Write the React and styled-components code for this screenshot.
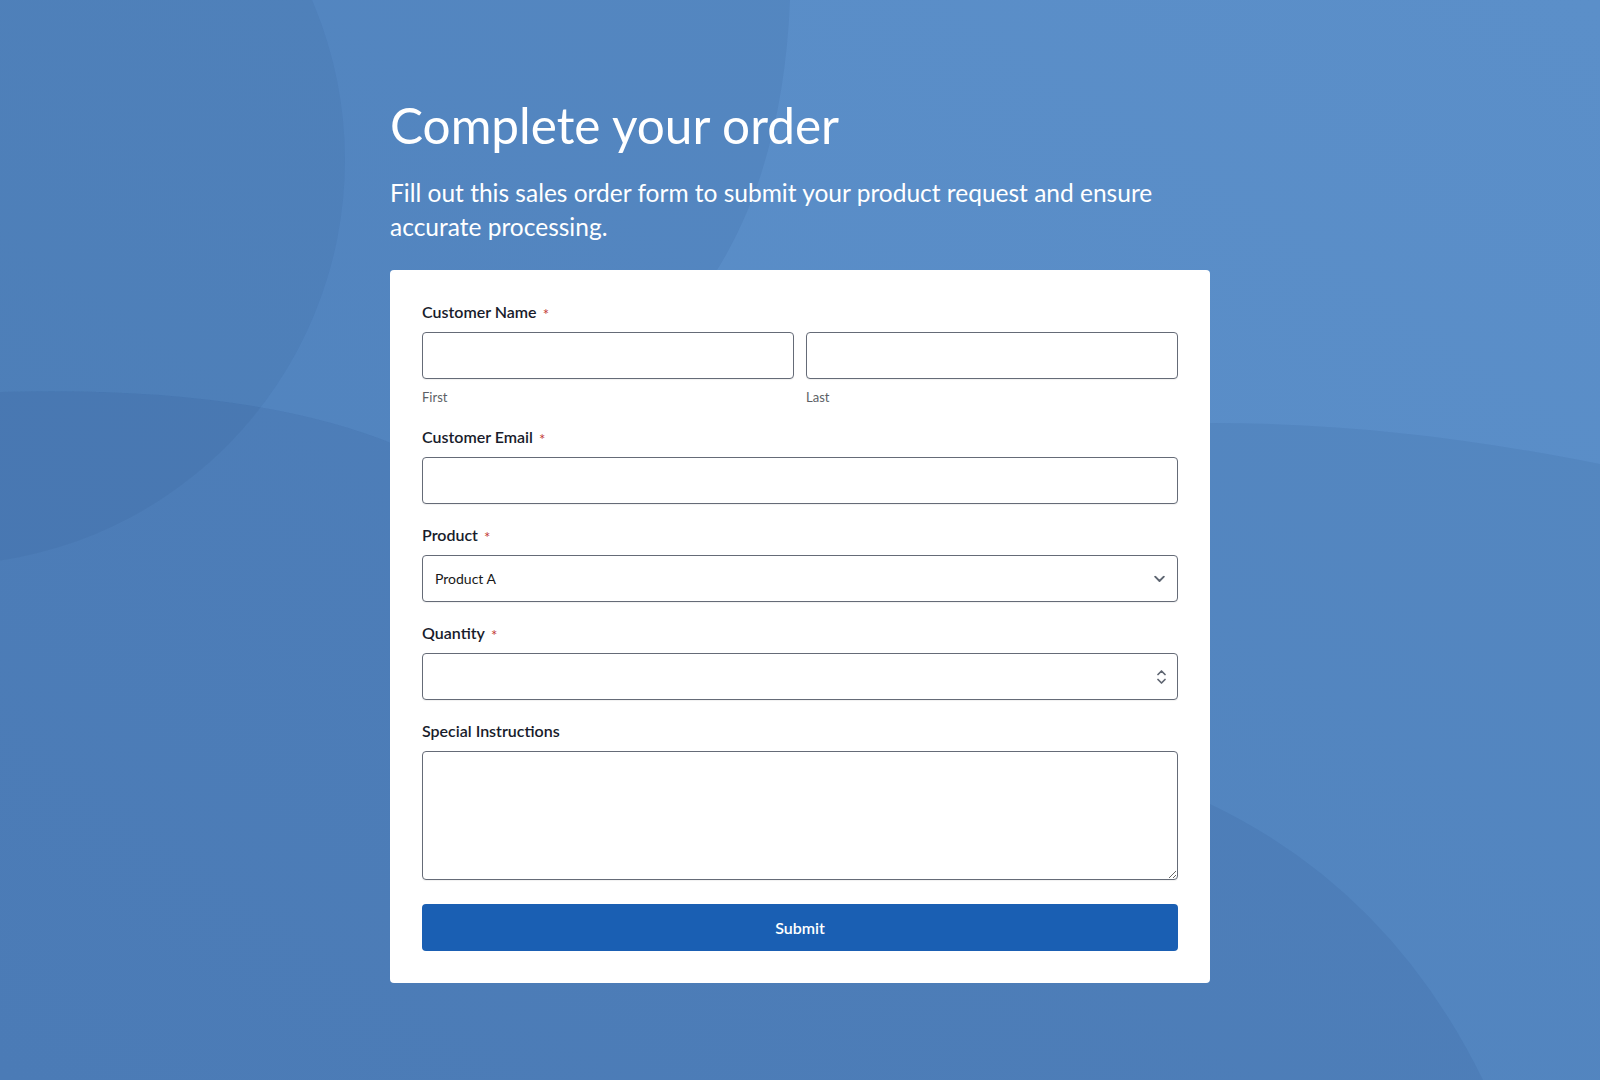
import React from 'react';
import styled, { createGlobalStyle } from 'styled-components';

// soft blue backdrop with the large faded shapes behind the form
const backdrop = `<svg xmlns='http://www.w3.org/2000/svg' viewBox='0 0 1600 1080' preserveAspectRatio='none'>
<defs><linearGradient id='g' x1='1' y1='0' x2='0' y2='1'><stop offset='0' stop-color='#5b8fc9'/><stop offset='1' stop-color='#5689c4'/></linearGradient></defs>
<rect width='1600' height='1080' fill='url(#g)'/>
<g fill='#142d64'>
<path fill-opacity='0.07' d='M0 0H790C786 105 762 200 714 275L396 445Q250 385 0 392Z'/>
<circle fill-opacity='0.06' cx='-60' cy='160' r='405'/>
<path fill-opacity='0.07' d='M0 392Q250 385 396 445L1210 423C1350 423 1480 440 1600 464V1080H0Z'/>
<path fill-opacity='0.07' d='M0 392Q250 385 396 445L1000 700L1210 804Q1390 890 1483 1080H0Z'/>
</g></svg>`;

const GlobalStyle = createGlobalStyle`
  html, body {
    margin: 0;
    padding: 0;
  }
  body {
    font-family: Lato, 'Noto Sans', sans-serif;
  }
`;

const Page = styled.div`
  min-height: 100vh;
  box-sizing: border-box;
  padding: 97px 0 80px;
  display: flex;
  justify-content: center;
  background: #5588c3 url("data:image/svg+xml,${encodeURIComponent(backdrop)}") center / 100% 100% no-repeat;
`;

const Column = styled.div`
  width: 820px;
`;

const Title = styled.h1`
  margin: 0;
  color: #fff;
  font-size: 49.5px;
  font-weight: 400;
  line-height: 57.6px;
`;

const Intro = styled.p`
  margin: 21px 0 25px;
  color: #fff;
  font-size: 24.5px;
  line-height: 34.7px;
`;

const Card = styled.form`
  display: flex;
  flex-direction: column;
  gap: 21px;
  padding: 32px;
  background: #fff;
  border-radius: 4px;
`;

const Field = styled.div`
  display: flex;
  flex-direction: column;
`;

const Label = styled.label`
  margin-bottom: 10px;
  color: #181c2b;
  font-size: 16px;
  font-weight: 600;
  line-height: 20px;
`;

const Required = styled.span`
  margin-left: 6px;
  color: #c23934;
  font-size: 15px;
  font-weight: 400;
  line-height: 1;
  vertical-align: -2px;
`;

const NameRow = styled.div`
  display: grid;
  grid-template-columns: 1fr 1fr;
  gap: 12px;
`;

const NamePart = styled.div`
  display: flex;
  flex-direction: column;
`;

const Hint = styled.span`
  margin-top: 9px;
  color: #5c5f66;
  font-size: 13px;
  line-height: 18px;
`;

const boxStyles = `
  box-sizing: border-box;
  width: 100%;
  border: 1px solid #656b77;
  border-radius: 4px;
  background: #fff;
  box-shadow: 0 1px 1px rgba(0, 0, 0, 0.06);
  font-family: Lato, 'Noto Sans', sans-serif;
  font-size: 14px;
  color: #181818;
  outline: none;
`;

const Input = styled.input`
  ${boxStyles}
  height: 47px;
  padding: 0 12px;
`;

const Control = styled.div`
  position: relative;
`;

const Select = styled.select`
  ${boxStyles}
  appearance: none;
  height: 47px;
  padding: 0 36px 0 12px;
`;

const ControlIcon = styled.svg`
  position: absolute;
  right: ${(p) => p.$right}px;
  top: 50%;
  transform: translateY(-50%);
  pointer-events: none;
`;

const NumberInput = styled(Input)`
  appearance: textfield;
  -moz-appearance: textfield;
  &::-webkit-inner-spin-button,
  &::-webkit-outer-spin-button {
    -webkit-appearance: none;
    margin: 0;
  }
`;

const TextArea = styled.textarea`
  ${boxStyles}
  display: block;
  height: 129px;
  padding: 12px;
  resize: vertical;
`;

const SubmitButton = styled.button`
  height: 47px;
  margin-top: 3px;
  border: none;
  border-radius: 4px;
  background: #1a5fb3;
  color: #fff;
  font-family: Lato, 'Noto Sans', sans-serif;
  font-size: 16px;
  font-weight: 600;
  cursor: pointer;
`;

const Chevron = () => (
  <ControlIcon $right={13} width="11" height="7" viewBox="0 0 11 7" fill="none">
    <path d="M1.2 1.2l4.3 4.3 4.3-4.3" stroke="#5f6672" strokeWidth="1.9" strokeLinecap="round" strokeLinejoin="round" />
  </ControlIcon>
);

const Spinner = () => (
  <ControlIcon $right={12} width="9" height="15" viewBox="0 0 9 15" fill="none">
    <path d="M1 5l3.5-3.5L8 5" stroke="#5f6672" strokeWidth="1.7" strokeLinecap="round" strokeLinejoin="round" />
    <path d="M1 10l3.5 3.5L8 10" stroke="#5f6672" strokeWidth="1.7" strokeLinecap="round" strokeLinejoin="round" />
  </ControlIcon>
);

const Star = () => <Required>*</Required>;

export default function App() {
  return (
    <>
      <GlobalStyle />
      <Page>
        <Column>
          <Title>Complete your order</Title>
          <Intro>
            Fill out this sales order form to submit your product request and ensure accurate processing.
          </Intro>
          <Card onSubmit={(e) => e.preventDefault()}>
            <Field>
              <Label>
                Customer Name<Star />
              </Label>
              <NameRow>
                <NamePart>
                  <Input type="text" />
                  <Hint>First</Hint>
                </NamePart>
                <NamePart>
                  <Input type="text" />
                  <Hint>Last</Hint>
                </NamePart>
              </NameRow>
            </Field>

            <Field>
              <Label>
                Customer Email<Star />
              </Label>
              <Input type="email" />
            </Field>

            <Field>
              <Label>
                Product<Star />
              </Label>
              <Control>
                <Select defaultValue="Product A">
                  <option>Product A</option>
                  <option>Product B</option>
                  <option>Product C</option>
                </Select>
                <Chevron />
              </Control>
            </Field>

            <Field>
              <Label>
                Quantity<Star />
              </Label>
              <Control>
                <NumberInput type="number" />
                <Spinner />
              </Control>
            </Field>

            <Field>
              <Label>Special Instructions</Label>
              <TextArea />
            </Field>

            <SubmitButton type="submit">Submit</SubmitButton>
          </Card>
        </Column>
      </Page>
    </>
  );
}
